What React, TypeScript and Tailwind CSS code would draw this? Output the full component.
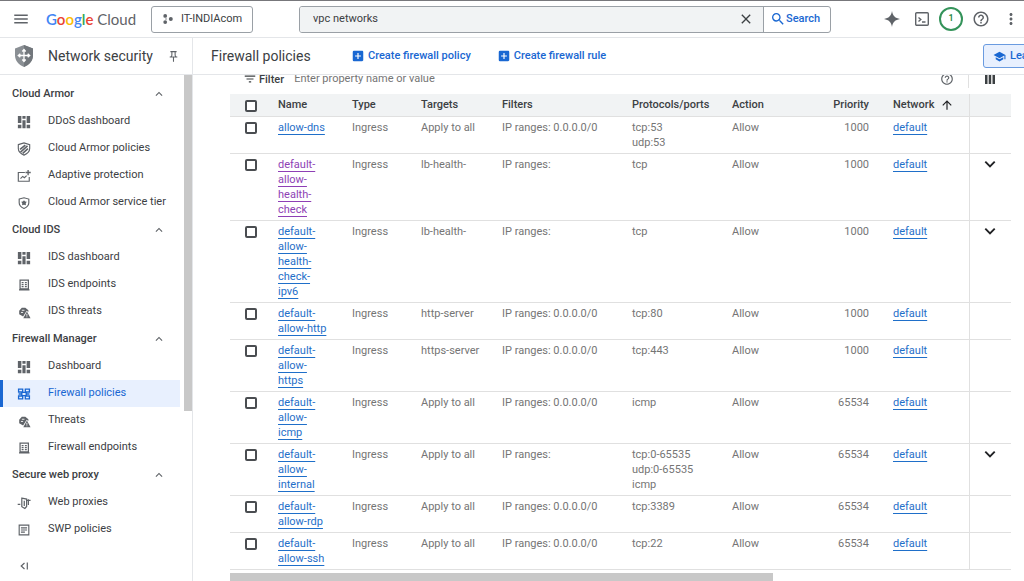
import type { ReactNode } from "react";
import {
  MdAddBox,
  MdArrowUpward,
  MdClose,
  MdExpandLess,
  MdFilterList,
  MdHelpOutline,
  MdMenu,
  MdMoreVert,
  MdOutlinePushPin,
  MdSchool,
  MdSearch,
} from "react-icons/md";

type IconName =
  | "dashboard"
  | "armor"
  | "adaptive"
  | "tier"
  | "endpoint"
  | "threat"
  | "firewall"
  | "proxy"
  | "policy";

const ICONS: Record<IconName, ReactNode> = {
  dashboard: (
    <path
      d="M1 1h4v8H1zM1 11h4v4H1zM6.200 1h3.600v3.200H6.200zM6.200 6h3.600v9H6.200zM11 1h4v8h-4zM11 11h4v4h-4z"
      fill="currentColor"
    />
  ),
  armor: (
    <g fill="none" stroke="currentColor" strokeWidth="1.300">
      <path d="M1.500 3L8 1l6.500 2v4.500c0 3.500-2.900 6-6.500 7.500-3.600-1.500-6.500-4-6.500-7.500z" />
      <path d="M3.500 8.500l6-5M4 11.500l8-7M6.500 13l6-5.500" strokeWidth="1.800" />
    </g>
  ),
  adaptive: (
    <g fill="none" stroke="currentColor" strokeWidth="1.300">
      <path d="M9 4H1.500v10h12.500V9" />
      <path d="M4 11l2.500-2.500 2 1.500L11 7.500" />
      <path d="M12.700 1v6M9.700 4h6" strokeWidth="1.500" />
    </g>
  ),
  tier: (
    <g fill="none" stroke="currentColor" strokeWidth="1.300">
      <path d="M2.500 3.500L8 2l5.500 1.500v4.200c0 3-2.300 5.200-5.500 6.500-3.200-1.300-5.500-3.500-5.500-6.500z" />
      <path
        d="M8 4.800l1.200 1.500 2 .4-1.200 1.700.2 2.100L8 10l-2.200.5.2-2.100-1.200-1.700 2-.4z"
        fill="currentColor"
        stroke="none"
      />
    </g>
  ),
  endpoint: (
    <g fill="none" stroke="currentColor" strokeWidth="1.400">
      <path d="M3.500 2.500h9.500v10H3.500zM2.300 13.500h12" />
      <path d="M5.300 5.200h2.200M9 5.200h2.200M5.300 7.500h2.200M9 7.500h2.200M5.300 9.800h2.200M9 9.800h2.200" />
    </g>
  ),
  threat: (
    <>
      <path
        d="M2.500 6.500L5.500 3h4l3.500 3v2L11 6.500 7 13 2.500 10.500zM11.300 7.500l4.200 7.500H7.200z"
        fill="currentColor"
      />
      <path
        d="M5.500 6h3M4.500 8.500h2.500M11.300 10v2.300M11.300 13v1"
        stroke="white"
        strokeWidth="1"
      />
    </>
  ),
  firewall: (
    <g fill="none" stroke="currentColor" strokeWidth="1.500">
      <path d="M1.800 2.500h4.700v3.200H1.800zM9.500 2.500h4.700v3.200H9.500zM1.800 10.300h4.700v3.200H1.800zM9.500 10.300h4.700v3.200H9.500zM5.500 6.200h5v3.600h-5zM1.800 8h3.700M10.500 8h3.700" />
    </g>
  ),
  proxy: (
    <g fill="none" stroke="currentColor" strokeWidth="1.400">
      <path d="M5.500 2.500l5.500 1v8.500L9 14.300l-3.500-2zM8.300 5.500v6" />
      <path d="M.8 9.500h3M11 5h4.500M13 3.800v6.500" />
    </g>
  ),
  policy: (
    <g fill="none" stroke="currentColor" strokeWidth="1.300">
      <path d="M2.500 2.500h11v11h-11z" />
      <path d="M4.500 5.500h7M4.500 8h7M4.500 10.500h4.500" />
    </g>
  ),
};

const SECTIONS: { title: string; items: [string, IconName][] }[] = [
  {
    title: "Cloud Armor",
    items: [
      ["DDoS dashboard", "dashboard"],
      ["Cloud Armor policies", "armor"],
      ["Adaptive protection", "adaptive"],
      ["Cloud Armor service tier", "tier"],
    ],
  },
  {
    title: "Cloud IDS",
    items: [
      ["IDS dashboard", "dashboard"],
      ["IDS endpoints", "endpoint"],
      ["IDS threats", "threat"],
    ],
  },
  {
    title: "Firewall Manager",
    items: [
      ["Dashboard", "dashboard"],
      ["Firewall policies", "firewall"],
      ["Threats", "threat"],
      ["Firewall endpoints", "endpoint"],
    ],
  },
  {
    title: "Secure web proxy",
    items: [
      ["Web proxies", "proxy"],
      ["SWP policies", "policy"],
    ],
  },
];

interface Rule {
  name: string;
  targets: string;
  filters: string;
  protocols: string[];
  priority: number;
  visited?: boolean;
  expandable?: boolean;
}

const ANY = "IP ranges: 0.0.0.0/0";

const RULES: Rule[] = [
  { name: "allow-dns", targets: "Apply to all", filters: ANY, protocols: ["tcp:53", "udp:53"], priority: 1000 },
  { name: "default-allow-health-check", targets: "lb-health-", filters: "IP ranges:", protocols: ["tcp"], priority: 1000, visited: true, expandable: true },
  { name: "default-allow-health-check-ipv6", targets: "lb-health-", filters: "IP ranges:", protocols: ["tcp"], priority: 1000, expandable: true },
  { name: "default-allow-http", targets: "http-server", filters: ANY, protocols: ["tcp:80"], priority: 1000 },
  { name: "default-allow-https", targets: "https-server", filters: ANY, protocols: ["tcp:443"], priority: 1000 },
  { name: "default-allow-icmp", targets: "Apply to all", filters: ANY, protocols: ["icmp"], priority: 65534 },
  { name: "default-allow-internal", targets: "Apply to all", filters: "IP ranges:", protocols: ["tcp:0-65535", "udp:0-65535", "icmp"], priority: 65534, expandable: true },
  { name: "default-allow-rdp", targets: "Apply to all", filters: ANY, protocols: ["tcp:3389"], priority: 65534 },
  { name: "default-allow-ssh", targets: "Apply to all", filters: ANY, protocols: ["tcp:22"], priority: 65534 },
];

function Checkbox({ label }: { label: string }) {
  return (
    <input
      type="checkbox"
      aria-label={label}
      className="ml-[15px] mt-[2px] block size-3 appearance-none rounded-[2px] border-2 border-[#4a4d51] bg-white checked:bg-[#1967d2]"
    />
  );
}

function TopBar() {
  return (
    <header className="flex h-[38px] shrink-0 items-center border-t border-b border-t-[#77777b] border-b-[#e4e6e9] pl-3">
      <button aria-label="Navigation menu" className="text-[#5f6368]">
        <MdMenu className="size-[18px]" />
      </button>
      <a
        href="#"
        className="ml-4 w-[87px] shrink-0 whitespace-nowrap pb-px font-['Lato'] text-[15px] leading-5 text-[#5f6368]"
      >
        <span className="font-semibold">
          <span className="text-[#4285f4]">G</span>
          <span className="text-[#ea4335]">o</span>
          <span className="text-[#fbbc04]">o</span>
          <span className="text-[#4285f4]">g</span>
          <span className="text-[#34a853]">l</span>
          <span className="text-[#ea4335]">e</span>
        </span>{" "}
        Cloud
      </a>
      <button className="ml-[18px] flex h-[27px] w-[102px] shrink-0 items-center gap-2 rounded-[3px] border border-[#9aa0a6] pl-[11px] text-[11px] text-[#3c4043]">
        <svg viewBox="0 0 10 10" className="size-[10px]" fill="#5f6368">
          <circle cx="2.200" cy="1.900" r="1.900" />
          <circle cx="2.200" cy="8.100" r="1.900" />
          <circle cx="7.800" cy="5" r="2" />
          <circle cx="3" cy="5" r=".7" />
        </svg>
        IT-INDIAcom
      </button>

      {/* Search */}
      <form className="ml-[46px] flex h-[27px] min-w-0 flex-1 rounded-[3px] border border-[#9aa0a6]">
        <input
          type="text"
          aria-label="Search resources"
          defaultValue="vpc networks"
          className="min-w-0 flex-1 rounded-l-[2px] bg-[#f1f3f4] pl-[13px] text-[11px] text-[#3c4043] outline-none"
        />
        <button
          type="button"
          aria-label="Clear search"
          className="flex w-9 items-center justify-center border-r border-[#9aa0a6] bg-[#f1f3f4] text-[#3c4043]"
        >
          <MdClose className="size-4" />
        </button>
        <button
          type="button"
          className="flex w-[66px] items-center pl-[6px] font-medium text-[#1967d2]"
        >
          <MdSearch className="size-4" />
          <span className="text-[11px]">Search</span>
        </button>
      </form>

      <div className="ml-[52px] flex shrink-0 items-center text-[#5f6368]">
        <button aria-label="Gemini" className="flex w-[18px] justify-center">
          <svg viewBox="0 0 16 16" className="size-4" fill="currentColor">
            <path d="M8 0c.8 4.800 3.200 7.200 8 8-4.800.8-7.200 3.200-8 8-.8-4.800-3.200-7.200-8-8 4.800-.8 7.200-3.200 8-8z" />
          </svg>
        </button>
        <button aria-label="Cloud Shell" className="ml-[14px]">
          <svg
            viewBox="0 0 14 14"
            className="size-[14px]"
            fill="none"
            stroke="currentColor"
            strokeWidth="1.400"
          >
            <rect x=".7" y=".7" width="12.600" height="12.600" rx="1" />
            <path d="M3.500 5.500l2.300 2-2.300 2M7 10h3.500" />
          </svg>
        </button>
        <button
          aria-label="1 notification"
          className="ml-[10px] size-6 rounded-full border-2 border-[#34935a] text-[9px] font-medium text-[#188038]"
        >
          1
        </button>
        <button aria-label="Help" className="ml-[9px]">
          <MdHelpOutline className="size-[18px]" />
        </button>
        <button aria-label="More" className="ml-3 mr-1">
          <MdMoreVert className="size-[18px]" />
        </button>
      </div>
    </header>
  );
}

function SideBar() {
  return (
    <aside className="flex w-[193px] shrink-0 flex-col border-r border-[#e4e6e9]">
      <div className="flex h-[37px] shrink-0 items-center border-b border-[#e4e6e9] pl-[14px]">
        <svg viewBox="0 0 20 22" className="h-[22px] w-5 shrink-0">
          <path
            d="M10 0l9 3.500v7c0 5-3.500 9.200-9 11.500-5.500-2.300-9-6.500-9-11.500v-7z"
            fill="#8a8f94"
          />
          <path d="M10 0l9 3.500v7c0 5-3.500 9.200-9 11.500z" fill="#72777c" />
          <path
            d="M10 5v11M4.500 10.500h11M8.300 6.500l1.700-2 1.700 2M8.300 14.500l1.700 2 1.700-2M6.300 8.800l-2 1.700 2 1.700M13.700 8.800l2 1.700-2 1.700"
            fill="none"
            stroke="white"
            strokeWidth="1.300"
          />
        </svg>
        <h2 className="ml-[14px] flex-1 whitespace-nowrap text-[14px] text-[#3c4043]">
          Network security
        </h2>
        <button aria-label="Pin menu" className="mr-3 text-[#5f6368]">
          <MdOutlinePushPin className="size-[13px]" />
        </button>
      </div>

      <div className="flex min-h-0 flex-1">
        <nav className="min-w-0 flex-1 pt-[5px]">
          {SECTIONS.map((section) => (
            <section key={section.title}>
              <button className="flex h-7 w-full items-center justify-between pl-3 pr-[18px] text-[11px] font-medium text-[#3c4043]">
                {section.title}
                <MdExpandLess className="size-[14px] text-[#5f6368]" />
              </button>
              {section.items.map(([label, icon]) => {
                const active = label === "Firewall policies";
                return (
                  <a
                    key={label}
                    href="#"
                    className={
                      active
                        ? "mr-1 flex h-[27px] items-center gap-[17px] border-l-[3px] border-[#1967d2] bg-[#e8f0fe] pl-[14px] text-[11px] text-[#1967d2]"
                        : "mr-1 flex h-[27px] items-center gap-[17px] pl-[17px] text-[11px] text-[#3c4043]"
                    }
                  >
                    <svg
                      viewBox="0 0 16 16"
                      className={
                        active
                          ? "size-[14px] shrink-0"
                          : "size-[14px] shrink-0 text-[#5f6368]"
                      }
                    >
                      {ICONS[icon]}
                    </svg>
                    <span className="whitespace-nowrap">{label}</span>
                  </a>
                );
              })}
            </section>
          ))}
        </nav>
        <div className="w-2 shrink-0">
          <div className="h-[336px] bg-[#c8c8c8]" />
        </div>
      </div>

      <button
        aria-label="Collapse menu"
        className="flex h-[31px] shrink-0 items-center pl-5 text-[#5f6368]"
      >
        <svg
          viewBox="0 0 8 8"
          className="size-2"
          fill="none"
          stroke="currentColor"
          strokeWidth="1.200"
        >
          <path d="M4.500 1L1.200 4l3.300 3M7.300.5v7" />
        </svg>
      </button>
    </aside>
  );
}

function RuleRow({ rule }: { rule: Rule }) {
  return (
    <tr className="border-b border-[#e0e0e0] align-top">
      <td className="py-[3px]">
        <Checkbox label={`Select ${rule.name}`} />
      </td>
      <td className="py-[3px] pr-[25px]">
        <a
          href="#"
          className={
            rule.visited
              ? "text-[#8e3fb5] underline underline-offset-[3px]"
              : "text-[#1f6fc9] underline underline-offset-[3px]"
          }
        >
          {rule.name}
        </a>
      </td>
      <td className="py-[3px]">Ingress</td>
      <td className="py-[3px]">{rule.targets}</td>
      <td className="py-[3px]">{rule.filters}</td>
      <td className="py-[3px]">
        {rule.protocols.map((protocol) => (
          <div key={protocol}>{protocol}</div>
        ))}
      </td>
      <td className="py-[3px]">Allow</td>
      <td className="py-[3px] text-right">{rule.priority}</td>
      <td className="py-[3px] pl-6">
        <a href="#" className="text-[#1f6fc9] underline underline-offset-[3px]">
          default
        </a>
      </td>
      <td className="border-l border-[#e0e0e0] py-[3px]">
        {rule.expandable && (
          <button
            aria-label={`Expand ${rule.name}`}
            className="mx-auto block text-[#202124]"
          >
            <svg
              viewBox="0 0 14 14"
              className="size-[14px]"
              fill="none"
              stroke="currentColor"
              strokeWidth="1.900"
            >
              <path d="M2.300 4.700L7 9.400l4.700-4.700" />
            </svg>
          </button>
        )}
      </td>
    </tr>
  );
}

function RulesTable() {
  return (
    <table className="w-full table-fixed text-left text-[11px] leading-[15px] text-[#757575]">
      <colgroup>
        <col className="w-12" />
        <col className="w-[74px]" />
        <col className="w-[69px]" />
        <col className="w-[81px]" />
        <col />
        <col className="w-[100px]" />
        <col className="w-[70px]" />
        <col className="w-[67px]" />
        <col className="w-[100px]" />
        <col className="w-[42px]" />
      </colgroup>
      <thead>
        <tr className="h-[22px] border-b border-[#e0e0e0] bg-[#f1f3f4] text-[#3c4043] [&>th]:p-0 [&>th]:font-medium">
          <th>
            <Checkbox label="Select all rules" />
          </th>
          <th>Name</th>
          <th>Type</th>
          <th>Targets</th>
          <th>Filters</th>
          <th>Protocols/ports</th>
          <th>Action</th>
          <th className="text-right">Priority</th>
          <th>
            <span className="flex items-center gap-[6px] pl-6">
              Network
              <MdArrowUpward className="size-[14px] text-[#202124]" />
            </span>
          </th>
          <th className="border-l border-[#e0e0e0]" />
        </tr>
      </thead>
      <tbody>
        {RULES.map((rule) => (
          <RuleRow key={rule.name} rule={rule} />
        ))}
      </tbody>
    </table>
  );
}

function Main() {
  return (
    <main className="flex min-w-0 flex-1 flex-col">
      <div className="flex h-[37px] shrink-0 items-center overflow-hidden border-b border-[#e4e6e9] pl-[18px]">
        <h1 className="w-[140px] shrink-0 whitespace-nowrap text-[14px] text-[#3c4043]">
          Firewall policies
        </h1>
        <button className="flex shrink-0 items-center gap-[3px] text-[11px] font-medium text-[#1967d2]">
          <MdAddBox className="size-[14px]" />
          Create firewall policy
        </button>
        <button className="ml-[26px] flex shrink-0 items-center gap-[3px] text-[11px] font-medium text-[#1967d2]">
          <MdAddBox className="size-[14px]" />
          Create firewall rule
        </button>
        <button className="-mr-5 ml-auto flex h-6 w-[61px] shrink-0 items-center gap-1 rounded-[3px] border border-[#6a9be0] bg-[#e8f0fe] pl-[9px] text-[11px] font-medium text-[#1967d2]">
          <MdSchool className="size-[13px] shrink-0" />
          Learn
        </button>
      </div>

      <div className="flex min-h-0 flex-1 flex-col overflow-hidden pl-[37px] pr-[13px]">
        {/* Filter bar, partly scrolled under the page header */}
        <div className="-mt-[11px] flex h-[30px] shrink-0 items-center">
          <label
            htmlFor="rule-filter"
            className="ml-[13px] flex items-center gap-[2px] text-[11px] leading-[13px] font-medium text-[#3c4043]"
          >
            <MdFilterList className="size-[14px]" />
            Filter
          </label>
          <input
            id="rule-filter"
            type="text"
            placeholder="Enter property name or value"
            className="ml-[10px] min-w-0 flex-1 text-[11px] outline-none placeholder:text-[#757575]"
          />
          <button aria-label="Filter help" className="mr-[14px] text-[#5f6368]">
            <MdHelpOutline className="size-[14px]" />
          </button>
          <div className="h-[18px] w-px bg-[#e0e0e0]" />
          <button
            aria-label="Column display options"
            className="flex w-[42px] justify-center text-[#3c4043]"
          >
            <svg viewBox="0 0 10 10" className="size-[10px]" fill="currentColor">
              <path d="M0 0h2.500v10H0zM3.700 0h2.500v10H3.700zM7.500 0H10v10H7.500z" />
            </svg>
          </button>
        </div>
        <RulesTable />
        <div className="mt-[3px] h-2 shrink-0">
          <div className="h-full w-[543px] bg-[#c8c8c8]" />
        </div>
      </div>
    </main>
  );
}

export default function App() {
  return (
    <div className="flex h-screen flex-col overflow-hidden bg-white font-['Roboto',sans-serif]">
      <TopBar />
      <div className="flex min-h-0 flex-1">
        <SideBar />
        <Main />
      </div>
    </div>
  );
}
